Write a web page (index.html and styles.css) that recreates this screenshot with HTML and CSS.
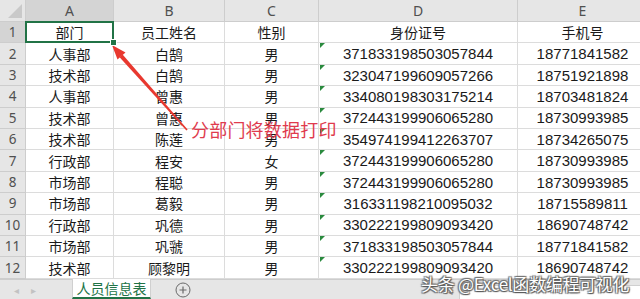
FILE: index.html
```html
<!DOCTYPE html>
<html lang="zh-CN">
<head>
    <meta charset="UTF-8">
    <meta name="viewport" content="width=device-width, initial-scale=1.0">
    <title>人员信息表</title>
    <link rel="stylesheet" href="styles.css">
</head>
<body>
    <div class="window">
        <div class="sheet">
            <div class="hd corner"></div>
            <div class="hd col active">A</div>
            <div class="hd col">B</div>
            <div class="hd col">C</div>
            <div class="hd col">D</div>
            <div class="hd col">E</div>

            <div class="hd row active">1</div>
            <div class="cell selected">部门</div>
            <div class="cell">员工姓名</div>
            <div class="cell">性别</div>
            <div class="cell">身份证号</div>
            <div class="cell">手机号</div>

            <div class="hd row">2</div>
            <div class="cell">人事部</div>
            <div class="cell">白鹄</div>
            <div class="cell">男</div>
            <div class="cell num flag">371833198503057844</div>
            <div class="cell num">18771841582</div>

            <div class="hd row">3</div>
            <div class="cell">技术部</div>
            <div class="cell">白鹄</div>
            <div class="cell">男</div>
            <div class="cell num flag">323047199609057266</div>
            <div class="cell num">18751921898</div>

            <div class="hd row">4</div>
            <div class="cell">人事部</div>
            <div class="cell">曾惠</div>
            <div class="cell">男</div>
            <div class="cell num flag">334080198303175214</div>
            <div class="cell num">18703481824</div>

            <div class="hd row">5</div>
            <div class="cell">技术部</div>
            <div class="cell">曾惠</div>
            <div class="cell">男</div>
            <div class="cell num flag">372443199906065280</div>
            <div class="cell num">18730993985</div>

            <div class="hd row">6</div>
            <div class="cell">技术部</div>
            <div class="cell">陈莲</div>
            <div class="cell">男</div>
            <div class="cell num flag">354974199412263707</div>
            <div class="cell num">18734265075</div>

            <div class="hd row">7</div>
            <div class="cell">行政部</div>
            <div class="cell">程安</div>
            <div class="cell">女</div>
            <div class="cell num flag">372443199906065280</div>
            <div class="cell num">18730993985</div>

            <div class="hd row">8</div>
            <div class="cell">市场部</div>
            <div class="cell">程聪</div>
            <div class="cell">男</div>
            <div class="cell num flag">372443199906065280</div>
            <div class="cell num">18730993985</div>

            <div class="hd row">9</div>
            <div class="cell">市场部</div>
            <div class="cell">葛毅</div>
            <div class="cell">男</div>
            <div class="cell num flag">316331198210095032</div>
            <div class="cell num">18715589811</div>

            <div class="hd row">10</div>
            <div class="cell">行政部</div>
            <div class="cell">巩德</div>
            <div class="cell">男</div>
            <div class="cell num flag">330222199809093420</div>
            <div class="cell num">18690748742</div>

            <div class="hd row">11</div>
            <div class="cell">市场部</div>
            <div class="cell">巩虢</div>
            <div class="cell">男</div>
            <div class="cell num flag">371833198503057844</div>
            <div class="cell num">18771841582</div>

            <div class="hd row">12</div>
            <div class="cell">技术部</div>
            <div class="cell">顾黎明</div>
            <div class="cell">男</div>
            <div class="cell num flag">330222199809093420</div>
            <div class="cell num">18690748742</div>
        </div>

        <div class="tabbar">
            <div class="nav">
                <span>&#9666;</span>
                <span>&#9656;</span>
            </div>
            <div class="tab">人员信息表</div>
            <div class="add">
                <svg width="16" height="16" viewBox="0 0 16 16">
                    <circle cx="8" cy="8" r="7" fill="none" stroke="#6a6a6a" stroke-width="1"/>
                    <path d="M8 4.5v7M4.5 8h7" stroke="#6a6a6a" stroke-width="1.2"/>
                </svg>
            </div>
            <div class="spacer"></div>
            <div class="scroll-left">&#9666;</div>
            <div class="scroll"></div>
        </div>

        <!-- annotation over the sheet -->
        <svg class="arrow" width="640" height="299" viewBox="0 0 640 299">
            <polygon points="187.6,129.4 186.4,130.6 119.6,57.2 122.6,54.6" fill="#e8382f"/>
            <polygon points="112,45 125.5,52.5 117.5,59.5" fill="#e8382f"/>
        </svg>
        <div class="note">分部门将数据打印</div>
        <div class="watermark">头条 @Excel函数编程可视化</div>
    </div>
</body>
</html>
```

FILE: styles.css
```css
body {
    margin: 0;
    overflow: hidden;
    background: #fff;
}
.window {
    position: relative;
    width: 640px;
    height: 299px;
    overflow: hidden;
    font-family: "Noto Sans CJK SC", sans-serif;
}
.sheet {
    display: grid;
    grid-template-columns: 26px 88px 111px 94px 199px 130px;
    grid-template-rows: 22px repeat(12, 21.42px);
    width: 648px;
}
.hd {
    box-sizing: border-box;
    background: #e6e6e6;
    color: #505050;
    font-family: "Noto Sans", sans-serif;
    font-size: 14px;
    display: flex;
    align-items: center;
    justify-content: center;
    border-right: 1px solid #cdcdcd;
    border-bottom: 1px solid #cdcdcd;
}
.hd.active {
    background: #d4d4d4;
}
.hd.row {
    font-size: 13.5px;
}
.corner {
    position: relative;
    background: #e6e6e6;
}
.corner::after {
    content: "";
    position: absolute;
    right: 3px;
    bottom: 3px;
    border-left: 14px solid transparent;
    border-bottom: 14px solid #c9c9c9;
}
.cell {
    position: relative;
    box-sizing: border-box;
    border-right: 1px solid #dcdcdc;
    border-bottom: 1px solid #dcdcdc;
    display: flex;
    align-items: center;
    justify-content: center;
    font-size: 14px;
    color: #1a1a1a;
    white-space: nowrap;
}
.cell.num {
    font-family: "Liberation Sans", "Noto Sans CJK SC", sans-serif;
    font-size: 15px;
}
.cell.flag::before {
    content: "";
    position: absolute;
    left: 1px;
    top: 0;
    border-top: 5px solid #2a8a3e;
    border-right: 5px solid transparent;
}
.cell.selected::after {
    content: "";
    position: absolute;
    left: -1px;
    top: -1px;
    right: -1px;
    bottom: -1px;
    border: 2px solid #217346;
}
.cell.selected::before {
    content: "";
    position: absolute;
    right: -4px;
    bottom: -4px;
    width: 5px;
    height: 5px;
    background: #217346;
    border: 1px solid #fff;
    z-index: 2;
}
.tabbar {
    display: flex;
    align-items: stretch;
    height: 20px;
    background: #e6e6e6;
    border-top: 1px solid #cdcdcd;
    box-sizing: border-box;
}
.nav {
    display: flex;
    align-items: center;
    gap: 12px;
    width: 72px;
    padding-left: 14px;
    box-sizing: border-box;
    color: #c2c2c2;
    font-size: 10px;
}
.tab {
    width: 79px;
    background: #fff;
    color: #217346;
    font-size: 14px;
    display: flex;
    align-items: center;
    justify-content: center;
    border-bottom: 2px solid #217346;
    border-left: 1px solid #d0d0d0;
    border-right: 1px solid #d0d0d0;
    box-sizing: border-box;
    margin-top: -1px;
}
.add {
    width: 64px;
    display: flex;
    align-items: center;
    justify-content: center;
    padding-top: 2px;
}
.spacer {
    flex: 1;
}
.scroll-left {
    width: 18px;
    color: #888;
    font-size: 9px;
    display: flex;
    align-items: center;
    justify-content: center;
    padding-top: 4px;
}
.scroll {
    width: 180px;
    margin-top: 5px;
    background: #fff;
    border: 1px solid #d0d0d0;
    border-right: none;
    border-bottom: none;
}
.arrow {
    position: absolute;
    left: 0;
    top: 0;
    pointer-events: none;
}
.note {
    position: absolute;
    left: 191px;
    top: 117px;
    color: #e03b4e;
    font-size: 18px;
    line-height: 24px;
    letter-spacing: 0.2px;
    white-space: nowrap;
}
.watermark {
    position: absolute;
    left: 421px;
    top: 272px;
    color: #fff;
    font-size: 17px;
    line-height: 24px;
    letter-spacing: -0.3px;
    white-space: nowrap;
    text-shadow: 0 0 1px #555, 1px 1px 1px #555, -1px -1px 1px #777, 1px -1px 1px #777, -1px 1px 1px #777;
}
```
